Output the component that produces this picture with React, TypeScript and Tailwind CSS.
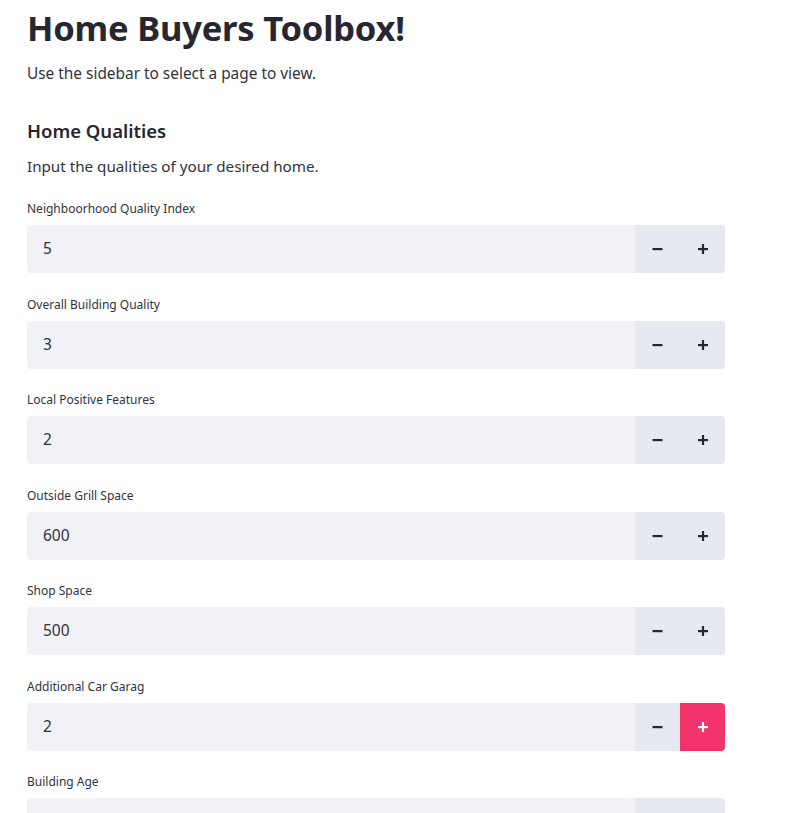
import React from "react";

const fields = [
  { label: "Neighboorhood Quality Index", value: "5" },
  { label: "Overall Building Quality", value: "3" },
  { label: "Local Positive Features", value: "2" },
  { label: "Outside Grill Space", value: "600" },
  { label: "Shop Space", value: "500" },
  { label: "Additional Car Garag", value: "2", hot: true },
  { label: "Building Age", value: "" },
];

const Minus = () => (
  <svg width="11" height="10" viewBox="0 0 11 10">
    <rect x="0.5" y="4" width="10" height="2.2" fill="#262730" />
  </svg>
);

const Plus = ({ color }: { color: string }) => (
  <svg width="10" height="10" viewBox="0 0 10 10">
    <rect x="0" y="4" width="10" height="2.2" fill={color} />
    <rect x="3.9" y="0" width="2.2" height="10" fill={color} />
  </svg>
);

export default function App() {
  return (
    <div
      className="h-[813px] overflow-hidden bg-white text-[#31333f]"
      style={{ fontFamily: '"Noto Sans", "Open Sans", sans-serif' }}
    >
      <div className="w-[698px] ml-[27px] pt-[4px]">
        <h1 className="text-[34.5px] leading-[48px] font-bold text-[#262730] tracking-[-0.2px]">
          Home Buyers Toolbox!
        </h1>
        <p className="mt-[10px] text-[15.4px] leading-[24px]">Use the sidebar to select a page to view.</p>
        <h3 className="mt-[31px] text-[18.5px] leading-[28px] font-semibold text-[#262730]">Home Qualities</h3>
        <p className="mt-[9px] text-[15.2px] leading-[24px]">Input the qualities of your desired home.</p>

        <div className="mt-[23px] flex flex-col">
          {fields.map((f) => (
            <div key={f.label} className="flex flex-col mb-[23.5px]">
              <label className="text-[12px] leading-[16px] text-[#31333f]">{f.label}</label>
              <div className="mt-[8px] flex h-[48px]">
                <div className="flex-1 flex items-center pl-[16px] bg-[#f0f2f6] rounded-l-[4px] text-[15.5px] text-[#31333f]">
                  {f.value}
                </div>
                <div className="w-[45px] flex items-center justify-center bg-[#e6e9ef]">
                  {f.value && <Minus />}
                </div>
                <div
                  className={
                    f.hot
                      ? "w-[45px] flex items-center justify-center bg-[#f3336b] rounded-r-[4px]"
                      : "w-[45px] flex items-center justify-center bg-[#e6e9ef] rounded-r-[4px]"
                  }
                >
                  {f.value && <Plus color={f.hot ? "#ffffff" : "#262730"} />}
                </div>
              </div>
            </div>
          ))}
        </div>
      </div>
    </div>
  );
}
